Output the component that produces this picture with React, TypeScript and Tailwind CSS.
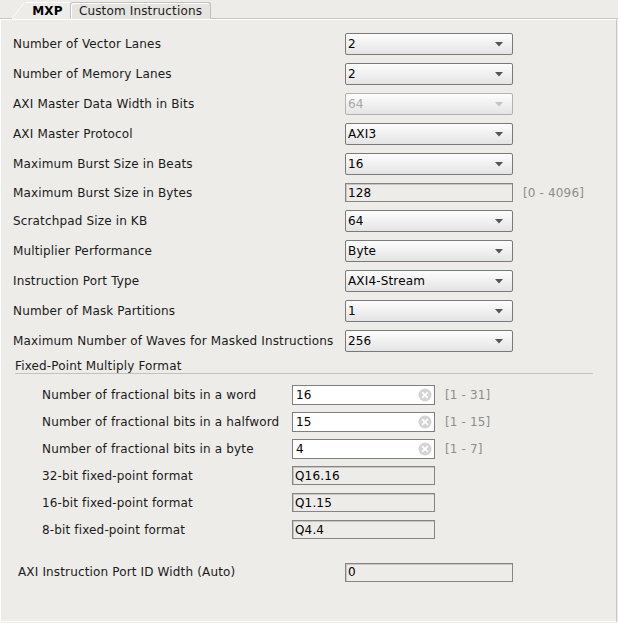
import React from 'react';

const font = { fontFamily: '"DejaVu Sans", "Liberation Sans", sans-serif' };

function Arrow({ disabled }: { disabled?: boolean }) {
  return (
    <svg width="8" height="5" viewBox="0 0 8 5" className="shrink-0">
      <path d="M0 0H8L4 4.5Z" fill={disabled ? '#c4c4c4' : '#555555'} />
    </svg>
  );
}

function Combo({ value, disabled }: { value: string; disabled?: boolean }) {
  return (
    <div
      className={`flex h-[22px] w-[168px] items-center justify-between rounded-[2px] border bg-gradient-to-b from-[#fdfdfd] to-[#e4e4e4] pl-[2px] pr-[9px] ${
        disabled ? 'border-[#b4b2af] text-[#a6a6a6]' : 'border-[#7a7a7a] text-black'
      }`}
    >
      <span>{value}</span>
      <Arrow disabled={disabled} />
    </div>
  );
}

function Field({ value, w = 'w-[168px]' }: { value: string; w?: string }) {
  return (
    <div
      className={`flex h-[19px] ${w} items-center border border-[#858585] bg-[#eeece9] pl-[2px] text-black shadow-[inset_1px_1px_0_#c8c6c3]`}
    >
      {value}
    </div>
  );
}

function ClearField({ value }: { value: string }) {
  return (
    <div className="flex h-[20px] w-[143px] items-center justify-between border border-[#7f7f7f] bg-white pl-[3px] pr-[2px] text-black">
      <span>{value}</span>
      <svg width="14" height="14" viewBox="0 0 14 14">
        <circle cx="7" cy="7" r="6.5" fill="#d4d4d4" />
        <path d="M4.6 4.6L9.4 9.4M9.4 4.6L4.6 9.4" stroke="#fff" strokeWidth="1.6" strokeLinecap="round" />
      </svg>
    </div>
  );
}

const rows: { label: string; value: string; kind: 'combo' | 'disabled' | 'field'; range?: string }[] = [
  { label: 'Number of Vector Lanes', value: '2', kind: 'combo' },
  { label: 'Number of Memory Lanes', value: '2', kind: 'combo' },
  { label: 'AXI Master Data Width in Bits', value: '64', kind: 'disabled' },
  { label: 'AXI Master Protocol', value: 'AXI3', kind: 'combo' },
  { label: 'Maximum Burst Size in Beats', value: '16', kind: 'combo' },
  { label: 'Maximum Burst Size in Bytes', value: '128', kind: 'field', range: '[0 - 4096]' },
  { label: 'Scratchpad Size in KB', value: '64', kind: 'combo' },
  { label: 'Multiplier Performance', value: 'Byte', kind: 'combo' },
  { label: 'Instruction Port Type', value: 'AXI4-Stream', kind: 'combo' },
  { label: 'Number of Mask Partitions', value: '1', kind: 'combo' },
  { label: 'Maximum Number of Waves for Masked Instructions', value: '256', kind: 'combo' },
];

const fixedRows: { label: string; value: string; range?: string }[] = [
  { label: 'Number of fractional bits in a word', value: '16', range: '[1 - 31]' },
  { label: 'Number of fractional bits in a halfword', value: '15', range: '[1 - 15]' },
  { label: 'Number of fractional bits in a byte', value: '4', range: '[1 - 7]' },
  { label: '32-bit fixed-point format', value: 'Q16.16' },
  { label: '16-bit fixed-point format', value: 'Q1.15' },
  { label: '8-bit fixed-point format', value: 'Q4.4' },
];

export default function App() {
  return (
    <div className="h-[623px] w-[618px] bg-[#eeece9] text-[12px] tracking-[0.15px] text-[#1a1a1a]" style={font}>
      {/* tabs */}
      <div className="flex h-[19px] items-end">
        <svg width="25" height="19" viewBox="0 0 25 19" className="shrink-0">
          <path d="M11 19L24 2.5H25V19Z" fill="#eeece9" />
          <path d="M11.5 19L24 3" stroke="#ffffff" strokeWidth="1" />
          <path d="M0 18.5H12" stroke="#c8c6c3" strokeWidth="1" />
        </svg>
        <div className="flex h-[17px] w-[45px] items-center justify-center border-t border-white font-bold text-black">
          MXP
        </div>
        <div className="flex h-[17px] w-[141px] items-center justify-center rounded-t-[3px] border border-b-0 border-[#c3c1be] bg-[#e6e4e1] shadow-[inset_1px_1px_0_#fff]">
          Custom Instructions
        </div>
        <div className="h-px flex-1 bg-[#c8c6c3]" />
      </div>

      {/* panel */}
      <div className="h-[603px] w-[617px] border-r border-b border-r-[#c8c6c3] border-b-[#ffffff] shadow-[inset_1px_0_0_#fff] border-t border-t-white">
        <div className="pt-[9px]">
          {rows.map((r) => (
            <div
              key={r.label}
              className={`flex items-center ${r.kind === 'field' ? 'h-[27px]' : 'h-[30px]'}`}
            >
              <div className="w-[345px] pl-[13px]">{r.label}</div>
              {r.kind === 'field' ? (
                <Field value={r.value} />
              ) : (
                <Combo value={r.value} disabled={r.kind === 'disabled'} />
              )}
              {r.range && <span className="ml-[10px] text-[#8c8c8c]">{r.range}</span>}
            </div>
          ))}
        </div>

        {/* fixed point group */}
        <div className="ml-[15px] mr-[23px] flex h-[18px] items-start border-b border-[#c4c2bf] pt-[1px]">
          Fixed-Point Multiply Format
        </div>
        <div className="pt-[7px]">
          {fixedRows.map((r) => (
            <div key={r.label} className="flex h-[27px] items-center">
              <div className="w-[292px] pl-[42px]">{r.label}</div>
              {r.range ? <ClearField value={r.value} /> : <Field value={r.value} w="w-[143px]" />}
              {r.range && <span className="ml-[10px] text-[#8c8c8c]">{r.range}</span>}
            </div>
          ))}
        </div>

        <div className="mt-[15px] flex h-[28px] items-center">
          <div className="w-[345px] pl-[18px]">AXI Instruction Port ID Width (Auto)</div>
          <Field value="0" />
        </div>
      </div>
    </div>
  );
}
